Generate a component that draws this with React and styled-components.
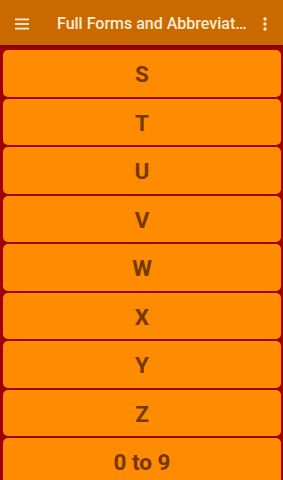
import React from 'react';
import styled, { createGlobalStyle } from 'styled-components';

const GlobalStyle = createGlobalStyle`
  html, body {
    margin: 0;
    padding: 0;
    height: 100%;
    overflow: hidden;
    background: #a00000;
    font-family: Roboto, "Noto Sans", sans-serif;
  }
`;

const Screen = styled.div`
  width: 283px;
  height: 480px;
  display: flex;
  flex-direction: column;
  background: #a00000;
  overflow: hidden;
`;

const Toolbar = styled.header`
  height: 45px;
  padding-top: 2px;
  box-sizing: border-box;
  flex-shrink: 0;
  display: flex;
  align-items: center;
  background: #c96900;
  color: #fcecd2;
  box-shadow: 0 1px 2px rgba(0, 0, 0, 0.3);
`;

const MenuButton = styled.div`
  width: 57px;
  padding-left: 15px;
  box-sizing: border-box;
  display: flex;
  align-items: center;
`;

const Title = styled.h1`
  flex: 1;
  margin: 0;
  font-size: 16px;
  font-weight: 500;
  white-space: nowrap;
  overflow: hidden;
  text-overflow: ellipsis;
`;

const MoreButton = styled.div`
  width: 36px;
  flex-shrink: 0;
  display: flex;
  justify-content: center;
`;

const List = styled.div`
  display: flex;
  flex-direction: column;
  gap: 2px;
  padding: 5px 2px 0 3px;
`;

const LetterButton = styled.button`
  height: 46.5px;
  flex-shrink: 0;
  border: none;
  border-radius: 5px;
  background: #ff8b00;
  color: #743800;
  font-family: Roboto, "Noto Sans", sans-serif;
  font-size: 22.5px;
  font-weight: 700;
  box-shadow: 0 1px 1px rgba(120, 30, 0, 0.5);
  padding: 2px 0 0;
`;

const items = ['S', 'T', 'U', 'V', 'W', 'X', 'Y', 'Z', '0 to 9'];

export default function App() {
  return (
    <Screen>
      <GlobalStyle />
      <Toolbar>
        <MenuButton>
          <svg width="14" height="12" viewBox="0 0 14 12">
            <rect x="0" y="0.5" width="14" height="1.8" fill="#fcecd2" />
            <rect x="0" y="5.1" width="14" height="1.8" fill="#fcecd2" />
            <rect x="0" y="9.7" width="14" height="1.8" fill="#fcecd2" />
          </svg>
        </MenuButton>
        <Title>Full Forms and Abbreviations</Title>
        <MoreButton>
          <svg width="4" height="14" viewBox="0 0 4 14">
            <circle cx="2" cy="2" r="1.7" fill="#fcecd2" />
            <circle cx="2" cy="7" r="1.7" fill="#fcecd2" />
            <circle cx="2" cy="12" r="1.7" fill="#fcecd2" />
          </svg>
        </MoreButton>
      </Toolbar>
      <List>
        {items.map((item) => (
          <LetterButton key={item}>{item}</LetterButton>
        ))}
      </List>
    </Screen>
  );
}
